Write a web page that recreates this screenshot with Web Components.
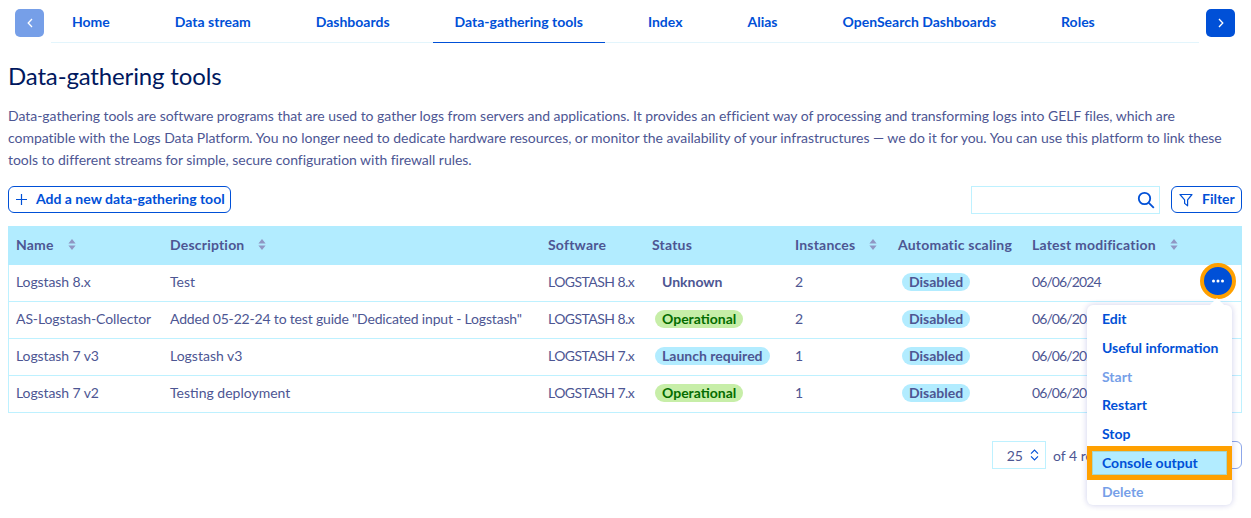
<!DOCTYPE html>
<html lang="en"><head><meta charset="utf-8"><title>Data-gathering tools</title>
<style>
html,body{margin:0;padding:0;background:#fff}
body{width:1251px;height:518px;overflow:hidden;font-family:"Lato","Noto Sans","Liberation Sans",sans-serif;font-size:14px;color:#4d5693}
</style></head><body>
<app-page></app-page>
<template id="t-page">
<style>
:host{display:block;position:relative;height:518px;padding:0 9px 0 8px;box-sizing:border-box}
h1{margin:17px 0 0;font-size:24px;line-height:32px;font-weight:400;color:#00185e;letter-spacing:-.15px}
p{margin:13px 0 0;font-size:14px;line-height:22px;color:#4d5693;letter-spacing:-.035px;width:1234px}
.actions{display:flex;justify-content:space-between;align-items:flex-start;margin-top:15px;height:28px}
.right{display:flex;align-items:flex-start;gap:11px}
.search{width:189px;height:28px;border:1px solid #bef1ff;box-sizing:border-box;display:flex;align-items:center;justify-content:flex-end;padding-right:4px}
.foot{display:flex;justify-content:flex-end;align-items:center;margin-top:28px;height:28px;gap:7px;font-size:14px}
.sel{width:54px;height:28px;box-sizing:border-box;border:1px solid #bef1ff;display:flex;align-items:center;justify-content:flex-end;gap:7px;padding-right:6px}
.foot span.of{width:189px}
.ghost{position:absolute;left:1200px;top:441px;width:42px;height:28px;box-sizing:border-box;border:1px solid #8da7ea;border-radius:6px}
svg{display:block}
</style>
<app-tabs></app-tabs>
<h1>Data-gathering tools</h1>
<p>Data-gathering tools are software programs that are used to gather logs from servers and applications. It provides an efficient way of processing and transforming logs into GELF files, which are compatible with the Logs Data Platform. You no longer need to dedicate hardware resources, or monitor the availability of your infrastructures — we do it for you. You can use this platform to link these tools to different streams for simple, secure configuration with firewall rules.</p>
<div class="actions">
  <app-button><svg slot="icon" width="13" height="13" viewBox="0 0 13 13" fill="none" stroke="#0050d7" stroke-width="1.2"><path d="M6.5 1v11M1 6.5h11"/></svg>Add a new data-gathering tool</app-button>
  <div class="right">
    <div class="search"><svg width="18" height="18" viewBox="0 0 18 18" fill="none" stroke="#0050d7" stroke-width="1.8"><circle cx="7.5" cy="7.5" r="5.7"/><path d="M11.8 11.8l5 5"/></svg></div>
    <app-button filter><svg slot="icon" width="14" height="14" viewBox="0 0 14 14" fill="none" stroke="#0050d7" stroke-width="1.2" stroke-linejoin="round"><path d="M1 1.5h12L8.6 6.8V12.8L5.6 10.4V6.8z"/></svg>Filter</app-button>
  </div>
</div>
<app-table></app-table>
<div class="foot">
  <div class="sel">25<svg width="9" height="12" viewBox="0 0 9 12" fill="none" stroke="#0050d7" stroke-width="1.1"><path d="M1 4.6l3.5-3.5L8 4.6M1 7.4l3.5 3.5L8 7.4"/></svg></div>
  <span class="of">of 4 results</span>
</div>
<div class="ghost"></div>
<app-menu></app-menu>
</template>

<template id="t-tabs">
<style>
:host{display:flex;align-items:flex-start;margin-left:7px;width:1220px;height:43px;font-size:14px;font-weight:700;color:#0050d7}
.nav{width:29px;height:28px;border-radius:5px;background:#0050d7;display:flex;align-items:center;justify-content:center;margin-top:9px;flex:none}
.nav.off{background:#769fe8}
.list{flex:1;margin:0 7px 0 7px;height:43px;box-sizing:border-box;border-bottom:1px solid #e3f5fc;display:flex;gap:21px}
.t{height:43px;box-sizing:border-box;padding:0 22px;line-height:44px;white-space:nowrap;flex:none}
.t:first-child{margin-left:-1px}
.t.on{border-bottom:1px solid #0050d7}
</style>
<div class="nav off"><svg width="8" height="12" viewBox="0 0 8 12" fill="none" stroke="#fff" stroke-width="1.3"><path d="M6 2L2.2 6 6 10"/></svg></div>
<div class="list">
<div class="t">Home</div><div class="t">Data stream</div><div class="t">Dashboards</div><div class="t on">Data-gathering tools</div><div class="t">Index</div><div class="t">Alias</div><div class="t">OpenSearch Dashboards</div><div class="t">Roles</div>
</div>
<div class="nav"><svg width="8" height="12" viewBox="0 0 8 12" fill="none" stroke="#fff" stroke-width="1.3"><path d="M2 2l3.8 4L2 10"/></svg></div>
</template>

<template id="t-button">
<style>
:host{display:inline-flex;align-items:center;box-sizing:border-box;height:27px;padding:0 5px 2px 6px;gap:8px;border:1px solid #0050d7;border-radius:6px;font-size:14px;font-weight:700;color:#0050d7;white-space:nowrap;background:#fff}
:host([filter]){width:71px;gap:9px;padding-left:7px}
::slotted(svg){margin-top:2px}
</style><slot name="icon"></slot><slot></slot>
</template>

<template id="t-table">
<style>
:host{display:block;width:1234px;margin-top:12px;border:solid #bef1ff;border-width:0 1px;box-sizing:border-box}
.row{display:grid;grid-template-columns:153px 378px 104px 143px 103px 134px 1fr;height:37px;align-items:center;border-bottom:1px solid #bef1ff;box-sizing:border-box;white-space:nowrap}
.row.head{height:39px;background:#b2ecff;border:none;font-weight:700;margin:0 -1px;grid-template-columns:154px 378px 104px 143px 103px 134px 1fr;letter-spacing:.2px}
.c{padding-left:8px;padding-bottom:4px;display:flex;align-items:center;min-width:0;box-sizing:border-box}
.c.p,.head .c{padding-bottom:2px}
.row:not(.head) .c:first-child{padding-left:7px;letter-spacing:-.1px}
.sort{margin-left:14px}
.b{display:inline-block;height:18px;line-height:18px;border-radius:9px;padding:0 7px;font-weight:700;margin-left:3px;background:#b2ecff}
.auto .b{margin-left:4px}
.b.g{background:#c7eea8;color:#046c00}
.b.n{background:none}
.sw{letter-spacing:-.55px}
.long{letter-spacing:-.18px}
.date{letter-spacing:-.9px}
</style>
</template>

<template id="t-menu">
<style>
:host{position:absolute;left:1087px;top:305px;width:145px;height:200px;box-sizing:border-box;background:#fff;border-radius:6px;box-shadow:0 0 6px rgba(0,14,156,.2);font-size:14px;font-weight:700;color:#0050d7;display:flex;flex-direction:column;z-index:3}
:host::before{content:"";position:absolute;left:125px;top:-5px;width:10px;height:10px;background:#fff;transform:rotate(45deg)}
.i{height:28.75px;line-height:28.75px;padding-left:15px;position:relative;flex:none;box-sizing:border-box}
.i.off{color:#769fe8}
.i.sel{background:#b2ecff;box-shadow:inset 0 0 0 1px #a9d6c6;outline:5px solid #ffa000;margin:2.375px 5px;padding-left:10px;height:24px;line-height:24px;z-index:1}
</style>
<div class="i">Edit</div><div class="i">Useful information</div><div class="i off">Start</div><div class="i">Restart</div><div class="i">Stop</div><div class="i sel">Console output</div><div class="i off">Delete</div>
</template>

<script>
function shadow(el,id){const r=el.attachShadow({mode:'open'});r.appendChild(document.getElementById(id).content.cloneNode(true));return r}
customElements.define('app-page',class extends HTMLElement{constructor(){super();shadow(this,'t-page')}});
customElements.define('app-tabs',class extends HTMLElement{constructor(){super();shadow(this,'t-tabs')}});
customElements.define('app-button',class extends HTMLElement{constructor(){super();shadow(this,'t-button')}});
customElements.define('app-menu',class extends HTMLElement{constructor(){super();shadow(this,'t-menu')}});
const sort='<svg class="sort" width="8" height="11" viewBox="0 0 8 11" fill="#8f96c4"><path d="M4 0l3.6 4.4H.4zM4 11L.4 6.6h7.2z"/></svg>';
const rows=[
['Logstash 8.x','Test','LOGSTASH 8.x',['n','Unknown'],'2',true],
['AS-Logstash-Collector','Added 05-22-24 to test guide "Dedicated input - Logstash"','LOGSTASH 8.x',['g','Operational'],'2'],
['Logstash 7 v3','Logstash v3','LOGSTASH 7.x',['','Launch required'],'1'],
['Logstash 7 v2','Testing deployment','LOGSTASH 7.x',['g','Operational'],'1']];
customElements.define('app-table',class extends HTMLElement{constructor(){super();const r=shadow(this,'t-table');
const w=document.createElement('div');
const hd=[['Name',1],['Description',1],['Software'],['Status'],['Instances',1],['Automatic scaling'],['Latest modification',1]];
let h='<div class="row head">'+hd.map(x=>`<div class="c">${x[0]}${x[1]?sort:''}</div>`).join('')+'</div>';
for(const x of rows){h+=`<div class="row"><div class="c">${x[0]}</div><div class="c${x[1].length>30?' long':''}">${x[1]}</div><div class="c sw">${x[2]}</div><div class="c p"><span class="b ${x[3][0]}">${x[3][1]}</span></div><div class="c">${x[4]}</div><div class="c auto p"><span class="b">Disabled</span></div><div class="c date">06/06/2024${x[5]?'<app-dots></app-dots>':''}</div></div>`}
w.innerHTML=h;r.appendChild(w)}});
customElements.define('app-dots',class extends HTMLElement{constructor(){super();const r=this.attachShadow({mode:'open'});r.innerHTML=`<style>:host{display:flex;align-items:center;justify-content:center;width:36px;height:36px;box-sizing:border-box;border-radius:50%;background:#0050d7;border:4px solid #ffa000;margin:-4px 5px -4px auto;flex:none}</style><svg width="14" height="4" viewBox="0 0 14 4" fill="#fff"><circle cx="2.5" cy="2" r="1.5"/><circle cx="7" cy="2" r="1.5"/><circle cx="11.5" cy="2" r="1.5"/></svg>`}});
</script>
</body></html>
